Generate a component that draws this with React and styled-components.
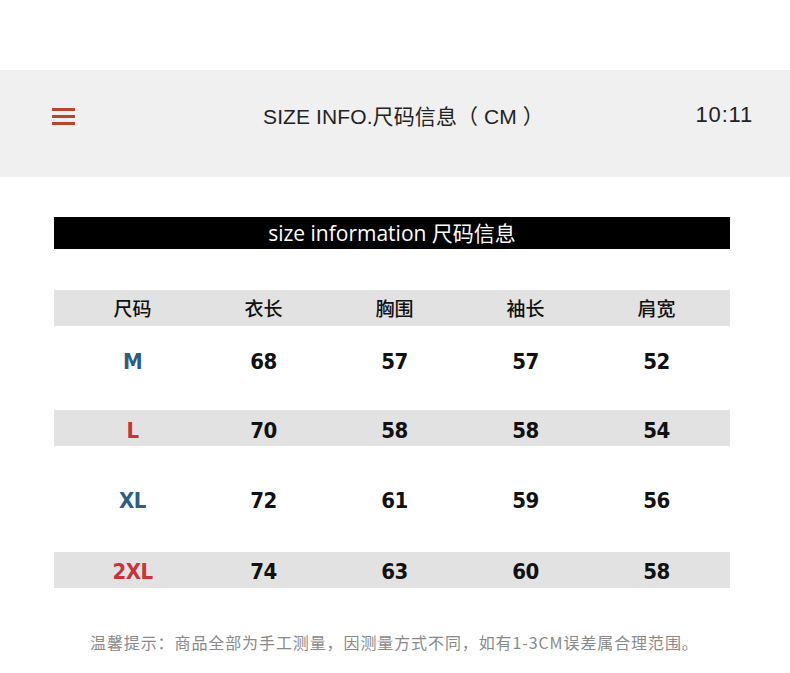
import React from 'react'
import styled, { createGlobalStyle } from 'styled-components'

const GlobalStyle = createGlobalStyle`
  html, body {
    margin: 0;
    padding: 0;
    background: #ffffff;
  }
  body {
    font-family: "Noto Sans", "Noto Sans CJK SC", sans-serif;
  }
`

const Page = styled.div`
  width: 790px;
  height: 673px;
  background: #ffffff;
  padding-top: 70px;
  box-sizing: border-box;
  overflow: hidden;
`

const TopBar = styled.header`
  height: 107px;
  background: #f0f0f0;
  display: grid;
  grid-template-columns: 1fr auto 1fr;
  align-items: center;
  padding: 0 37px 17px 52px;
  box-sizing: border-box;
`

const Burger = styled.div`
  display: flex;
  flex-direction: column;
  gap: 4px;
  width: 23px;
  margin-top: 2px;

  span {
    display: block;
    height: 3px;
    background: #b5462f;
  }
`

const Title = styled.h1`
  margin: 0;
  font-family: "Liberation Sans", "Noto Sans CJK SC", sans-serif;
  font-weight: 400;
  font-size: 21px;
  color: #222;
  letter-spacing: 0.1px;
  margin-left: 2px;
`

const Clock = styled.div`
  justify-self: end;
  font-family: "Liberation Sans", sans-serif;
  font-size: 22px;
  color: #222;
  letter-spacing: 0.8px;
`

const Content = styled.main`
  padding: 40px 60px 0 54px;
`

const Banner = styled.div`
  height: 32px;
  background: #000;
  color: #fff;
  display: flex;
  align-items: center;
  justify-content: center;
  padding-bottom: 3px;
  box-sizing: border-box;
  font-family: "Open Sans", "Noto Sans CJK SC", sans-serif;
  font-size: 21px;
  letter-spacing: 0;
`

const Table = styled.div`
  margin-top: 41px;
`

const Row = styled.div`
  display: grid;
  grid-template-columns: repeat(5, 131px);
  padding-left: 13px;
  height: 36px;
  align-items: center;
  background: ${p => (p.$shaded ? '#e2e2e2' : 'transparent')};
  margin-top: ${p => p.$gap}px;
`

const HeadCell = styled.div`
  text-align: center;
  font-family: "Noto Sans CJK SC", sans-serif;
  font-weight: 500;
  font-size: 19px;
  color: #111;
  margin-top: -2px;
`

const Cell = styled.div`
  text-align: center;
  font-family: "DejaVu Sans Condensed", "DejaVu Sans", sans-serif;
  font-weight: 600;
  font-size: 22px;
  color: ${p => p.$color || '#111'};
  letter-spacing: -0.5px;
  padding-top: ${p => p.$drop || 0}px;
`

const Note = styled.p`
  margin: 42px 0 0 36px;
  font-family: "Noto Sans CJK SC", sans-serif;
  font-size: 16px;
  color: #8a8a8a;
  letter-spacing: 0.9px;
`

const headers = ['尺码', '衣长', '胸围', '袖长', '肩宽']

const rows = [
  { size: 'M', color: '#2d5f85', vals: [68, 57, 57, 52], shaded: false, gap: 17, drop: 0 },
  { size: 'L', color: '#c9343b', vals: [70, 58, 58, 54], shaded: true, gap: 31, drop: 5 },
  { size: 'XL', color: '#2d5f85', vals: [72, 61, 59, 56], shaded: false, gap: 35, drop: 3 },
  { size: '2XL', color: '#c9343b', vals: [74, 63, 60, 58], shaded: true, gap: 35, drop: 2 },
]

export default function App() {
  return (
    <Page>
      <GlobalStyle />
      <TopBar>
        <Burger>
          <span />
          <span />
          <span />
        </Burger>
        <Title>SIZE INFO.尺码信息（ CM ）</Title>
        <Clock>10:11</Clock>
      </TopBar>
      <Content>
        <Banner>size information 尺码信息</Banner>
        <Table>
          <Row $shaded $gap={0}>
            {headers.map(h => (
              <HeadCell key={h}>{h}</HeadCell>
            ))}
          </Row>
          {rows.map(r => (
            <Row key={r.size} $shaded={r.shaded} $gap={r.gap}>
              <Cell $color={r.color} $drop={r.drop}>{r.size}</Cell>
              {r.vals.map((v, i) => (
                <Cell key={i} $drop={r.drop}>{v}</Cell>
              ))}
            </Row>
          ))}
        </Table>
        <Note>温馨提示：商品全部为手工测量，因测量方式不同，如有1-3CM误差属合理范围。</Note>
      </Content>
    </Page>
  )
}
